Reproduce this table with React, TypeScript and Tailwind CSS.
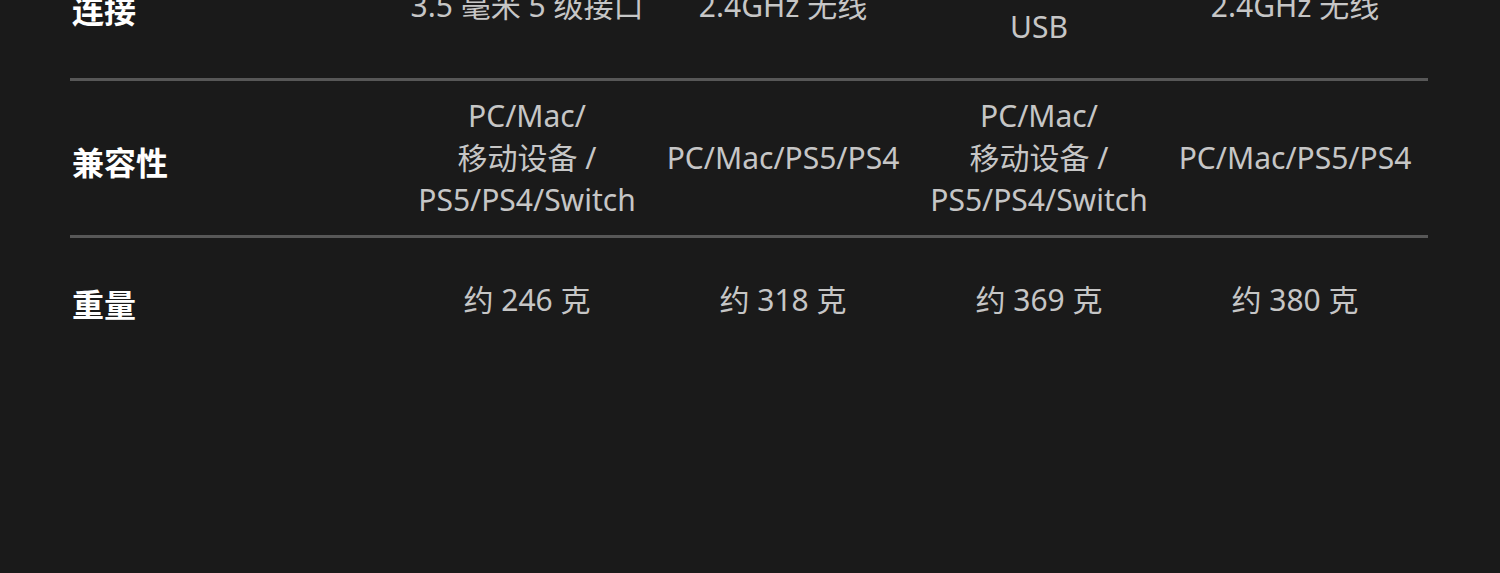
const rows: { label: string; height: string; cells: string[][] }[] = [
  {
    label: "连接",
    height: "h-[144px]",
    cells: [["3.5 毫米 5 级接口"], ["2.4GHz 无线"], ["蓝牙 /", "USB"], ["2.4GHz 无线"]],
  },
  {
    label: "兼容性",
    height: "h-[154px]",
    cells: [
      ["PC/Mac/", "移动设备 /", "PS5/PS4/Switch"],
      ["PC/Mac/PS5/PS4"],
      ["PC/Mac/", "移动设备 /", "PS5/PS4/Switch"],
      ["PC/Mac/PS5/PS4"],
    ],
  },
  {
    label: "重量",
    height: "h-[124px]",
    cells: [["约 246 克"], ["约 318 克"], ["约 369 克"], ["约 380 克"]],
  },
];

export default function App() {
  return (
    <div
      className="w-[1500px] h-[573px] overflow-hidden bg-[#1a1a1a]"
      style={{ fontFamily: '"Noto Sans", "Noto Sans CJK SC", sans-serif' }}
    >
      <div className="ml-[70px] mt-[-66px] w-[1358px]">
        {rows.map((row, i) => (
          <div key={row.label}>
            {i > 0 && <div className="h-[3px] bg-[#575757]" />}
            <div
              className={`grid grid-cols-[329px_256px_256px_256px_256px] items-center ${row.height}`}
            >
              <div className="pl-[2px] pt-[10px] text-[32px] font-bold text-white">
                {row.label}
              </div>
              {row.cells.map((lines, j) => (
                <div
                  key={j}
                  className="flex flex-col items-center text-[30px] leading-[42px] text-[#c6c6c6]"
                >
                  {lines.map((line) => (
                    <span key={line} className="whitespace-nowrap">
                      {line}
                    </span>
                  ))}
                </div>
              ))}
            </div>
          </div>
        ))}
      </div>
    </div>
  );
}
